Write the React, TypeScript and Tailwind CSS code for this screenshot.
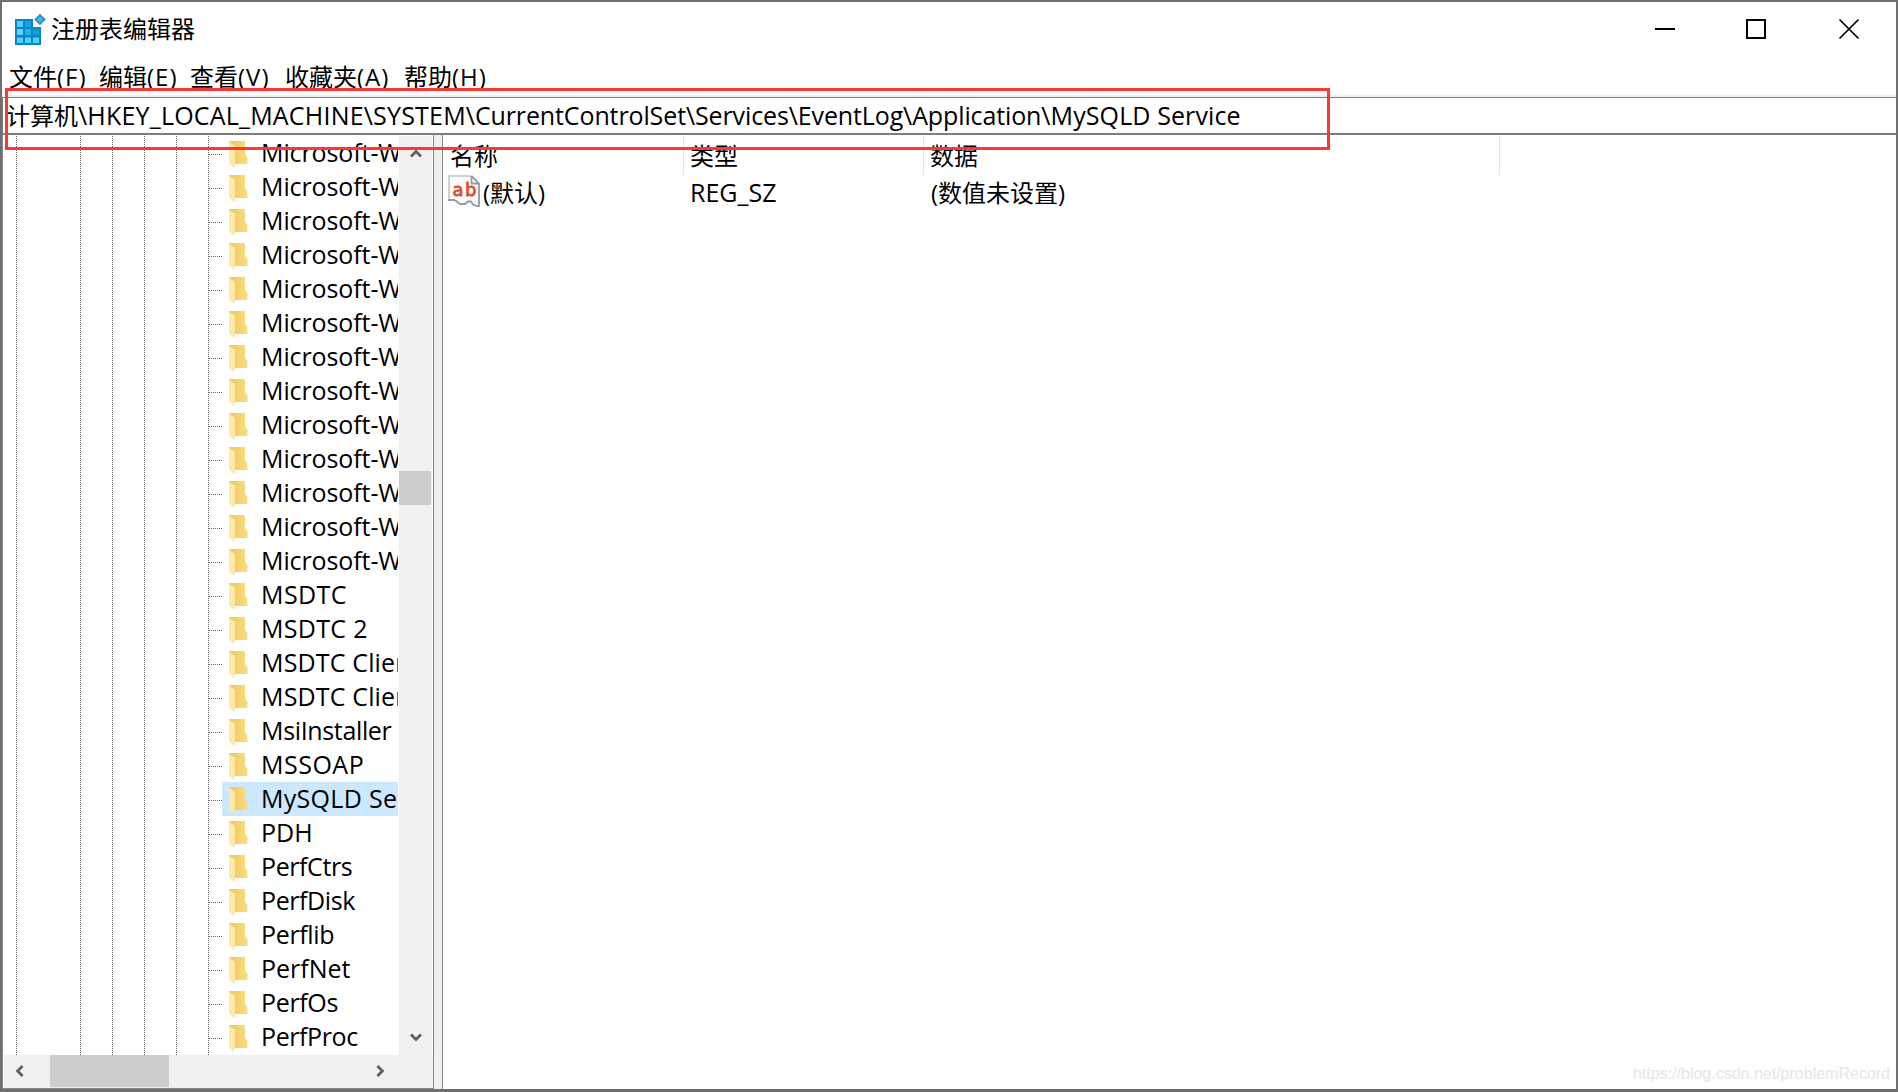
import React from "react";

const KEYS = [
  ...Array.from({ length: 13 }, () => ["Microsoft-Windows", "tracking-[-0.100px]"]),
  ["MSDTC", "tracking-[0.400px]"],
  ["MSDTC 2", "tracking-[0.300px]"],
  ["MSDTC Client", "tracking-[0.150px]"],
  ["MSDTC Client 2", "tracking-[0.150px]"],
  ["MsiInstaller", "tracking-[-0.350px]"],
  ["MSSOAP", "tracking-[0.500px]"],
  ["MySQLD Service", "tracking-[0.300px]"],
  ["PDH", "tracking-[0px]"],
  ["PerfCtrs", "tracking-[-0.400px]"],
  ["PerfDisk", "tracking-[-0.400px]"],
  ["Perflib", "tracking-[-0.350px]"],
  ["PerfNet", "tracking-[0px]"],
  ["PerfOs", "tracking-[-0.350px]"],
  ["PerfProc", "tracking-[-0.400px]"],
];

const SELECTED = "MySQLD Service";

const MENU = [
  { name: "文件", key: "(F)", box: "w-[90px]" },
  { name: "编辑", key: "(E)", box: "w-[91px]" },
  { name: "查看", key: "(V)", box: "w-[95px]" },
  { name: "收藏夹", key: "(A)", box: "w-[119px]" },
  { name: "帮助", key: "(H)", box: "w-[90px]" },
];

function AppIcon() {
  return (
    <svg width="32" height="34" viewBox="0 0 32 34" className="shrink-0">
      <path d="M1 6h18v8h8v18H1z" fill="#0a86c4" />
      <g fill="#4fd0fb">
        <rect x="3" y="8" width="6" height="6" />
        <rect x="3" y="16" width="6" height="6" fill="#5fd5fc" />
        <rect x="3" y="24.500" width="6" height="5.500" />
        <rect x="11" y="24.500" width="6" height="5.500" />
        <rect x="19" y="24.500" width="6" height="5.500" />
      </g>
      <g fill="#12a5dc">
        <rect x="11" y="8" width="6" height="6" />
        <rect x="11" y="16" width="6" height="6" fill="#22b2e8" />
        <rect x="19" y="16" width="6" height="6" fill="#08a0d8" />
      </g>
      <path d="M26 .7l5.800 5.800L26 12.300l-5.800-5.800z" fill="#2492c8" />
      <path d="M26 3.300l3.200 3.200-3.200 3.200-3.200-3.200z" fill="#49b4df" />
    </svg>
  );
}

function FolderIcon() {
  return (
    <svg width="20" height="28" viewBox="0 0 20 28" className="shrink-0">
      <defs>
        <linearGradient id="back" x1="0" x2="1">
          <stop offset="0" stopColor="#edc75f" />
          <stop offset="1" stopColor="#fbdd7e" />
        </linearGradient>
      </defs>
      <path d="M0 0h16v13l2.500 3v7H5z" fill="url(#back)" />
      <path d="M0 .5L6 5v20l-1 2.200L0 22z" fill="#ffe9a6" />
    </svg>
  );
}

function StringValueIcon() {
  return (
    <svg width="32" height="33" viewBox="0 0 32 33" className="shrink-0">
      <path d="M1 1h22l8 8v22l-6-1-3-3h-3l-2 2h-4l-3-3-4-1H1z" fill="#fafafa" />
      <path d="M1 26V1h22" fill="none" stroke="#d0d0d0" strokeWidth="2" />
      <path
        d="M23.500 1v7.500h7M23.500 1l7.500 7.500V31h-2l-4-1.500-2-3h-3l-3 2.500h-5L8 26l-2-1H0"
        fill="none"
        stroke="#9a9a9a"
        strokeWidth="1.800"
      />
      <text
        x="4.500"
        y="21"
        fontFamily="DejaVu Sans, sans-serif"
        fontSize="18"
        textLength="24"
        fill="#d9512c"
        stroke="#d9512c"
        strokeWidth=".8"
      >
        ab
      </text>
    </svg>
  );
}

function Chevron({ turn }: { turn: string }) {
  return (
    <svg width="12" height="10" viewBox="0 0 12 10" className={turn}>
      <path d="M1 7.600L6 2.600l5 5" fill="none" stroke="#606060" strokeWidth="2.800" />
    </svg>
  );
}

function Guides() {
  const line =
    "w-px bg-[repeating-linear-gradient(to_bottom,#6a6a6a_0_1px,transparent_1px_2px)]";
  return (
    <div className="flex w-[206px] shrink-0 pl-[13px]">
      <div className={line} />
      <div className="ml-[63px] flex gap-[31px]">
        <div className={line} />
        <div className={line} />
        <div className={line} />
        <div className={line} />
        <div className={line} />
      </div>
    </div>
  );
}

function Tree() {
  return (
    <div className="flex h-[919px] w-[395px] shrink-0 overflow-hidden">
      <Guides />
      <ul className="min-w-0 flex-1">
        {KEYS.map(([key, tracking], i) => (
          <li key={i} className="flex h-[34px]">
            <div className="mt-[18px] h-px w-[13px] shrink-0 bg-[repeating-linear-gradient(to_right,#6a6a6a_0_1px,transparent_1px_2px)]" />
            <div
              className={
                key === SELECTED
                  ? "flex min-w-0 flex-1 overflow-hidden bg-[#cce8ff] pl-[7px]"
                  : "flex min-w-0 flex-1 overflow-hidden pl-[7px]"
              }
            >
              <div className="pt-[5px]">
                <FolderIcon />
              </div>
              <span
                className={`ml-[12px] text-[25px] leading-[33px] whitespace-nowrap ${tracking}`}
              >
                {key}
              </span>
            </div>
          </li>
        ))}
      </ul>
    </div>
  );
}

export default function App() {
  return (
    <div className="relative flex h-[1092px] w-[1898px] flex-col overflow-hidden bg-[#6f6f70] pt-[2px] pr-[2px] pb-[3px] pl-[2px] font-['Open_Sans','Noto_Sans_CJK_SC',sans-serif] text-[24px] text-black">
      <div className="flex h-[1087px] flex-col bg-white">
        <header className="flex h-[50px] shrink-0 items-start pl-[12px]">
          <div className="pt-[11px]">
            <AppIcon />
          </div>
          <h1 className="ml-[5px] flex-1 pt-[7px] leading-[40px]">注册表编辑器</h1>
          <svg
            width="210"
            height="24"
            viewBox="0 0 210 24"
            className="mt-[15px] mr-[34px]"
            fill="none"
            stroke="#000"
          >
            <path d="M3 12h20" strokeWidth="2" />
            <rect x="95" y="3" width="18" height="18" strokeWidth="2" />
            <path d="M187.500 2.500l19 19M206.500 2.500l-19 19" strokeWidth="1.700" />
          </svg>
        </header>
        <nav className="flex h-[43px] shrink-0 pl-[7px] leading-[50px]">
          {MENU.map((m) => (
            <span key={m.name} className={`${m.box} whitespace-nowrap`}>
              {m.name}
              <span className="tracking-[1px]">{m.key}</span>
            </span>
          ))}
        </nav>
        <div className="h-[2px] shrink-0 bg-[#f0f0f0]" />
        <div className="h-[38px] shrink-0 border-t border-b-2 border-l border-[#7a7d82] pl-[3px] text-[24px] leading-[35px] whitespace-nowrap">
          计算机
          <span className="text-[25px]">
            <span className="tracking-[0.200px]">\HKEY_LOCAL_MACHINE\SYSTEM</span>
            <span className="tracking-[-0.120px]">
              \CurrentControlSet\Services\EventLog\Application
            </span>
            <span className="tracking-[0.100px]">\MySQLD Service</span>
          </span>
        </div>
        <div className="flex h-[954px] shrink-0">
          <section className="flex w-[432px] shrink-0 flex-col border-r border-b border-l border-[#828790] pt-px">
            <div className="flex h-[919px]">
              <Tree />
              <div className="ml-px flex w-[33px] flex-col items-center bg-[#f0f0f0]">
                <Chevron turn="mt-[13px] shrink-0" />
                <div className="mt-[312px] mr-px h-[34px] w-[32px] shrink-0 bg-[#cdcdcd]" />
                <div className="flex-1" />
                <Chevron turn="mb-[13px] shrink-0 rotate-180" />
              </div>
            </div>
            <div className="ml-px flex h-[33px] bg-[#f0f0f0]">
              <Chevron turn="mt-[11px] ml-[10px] -rotate-90" />
              <div className="ml-[24px] h-[32px] w-[119px] bg-[#cdcdcd]" />
              <Chevron turn="mt-[11px] ml-[205px] rotate-90" />
            </div>
          </section>
          <div className="w-[8px] shrink-0 bg-[#f0f0f0]" />
          <section className="flex-1 border-l border-[#828790] pt-px">
            <div className="flex h-[39px] leading-[39px]">
              <div className="w-[241px] border-r border-[#e5e5e5] pl-[7px]">名称</div>
              <div className="w-[240px] border-r border-[#e5e5e5] pl-[6px]">类型</div>
              <div className="w-[576px] border-r border-[#e5e5e5] pl-[6px]">数据</div>
            </div>
            <div className="flex h-[36px] leading-[36px]">
              <div className="flex w-[241px] pl-[5px]">
                <StringValueIcon />
                <span className="ml-[3px]">(默认)</span>
              </div>
              <div className="w-[240px] pl-[6px] text-[25px] leading-[34px]">REG_SZ</div>
              <div className="pl-[7px]">(数值未设置)</div>
            </div>
          </section>
        </div>
      </div>
      <div className="absolute top-[88px] left-[5px] h-[62px] w-[1325px] border-3 border-[#fd3636]" />
      <div className="absolute right-[8px] bottom-[8px] font-['Liberation_Sans',sans-serif] text-[16px] leading-[20px] text-[#e6e6e6]">
        https://blog.csdn.net/problemRecord
      </div>
    </div>
  );
}
